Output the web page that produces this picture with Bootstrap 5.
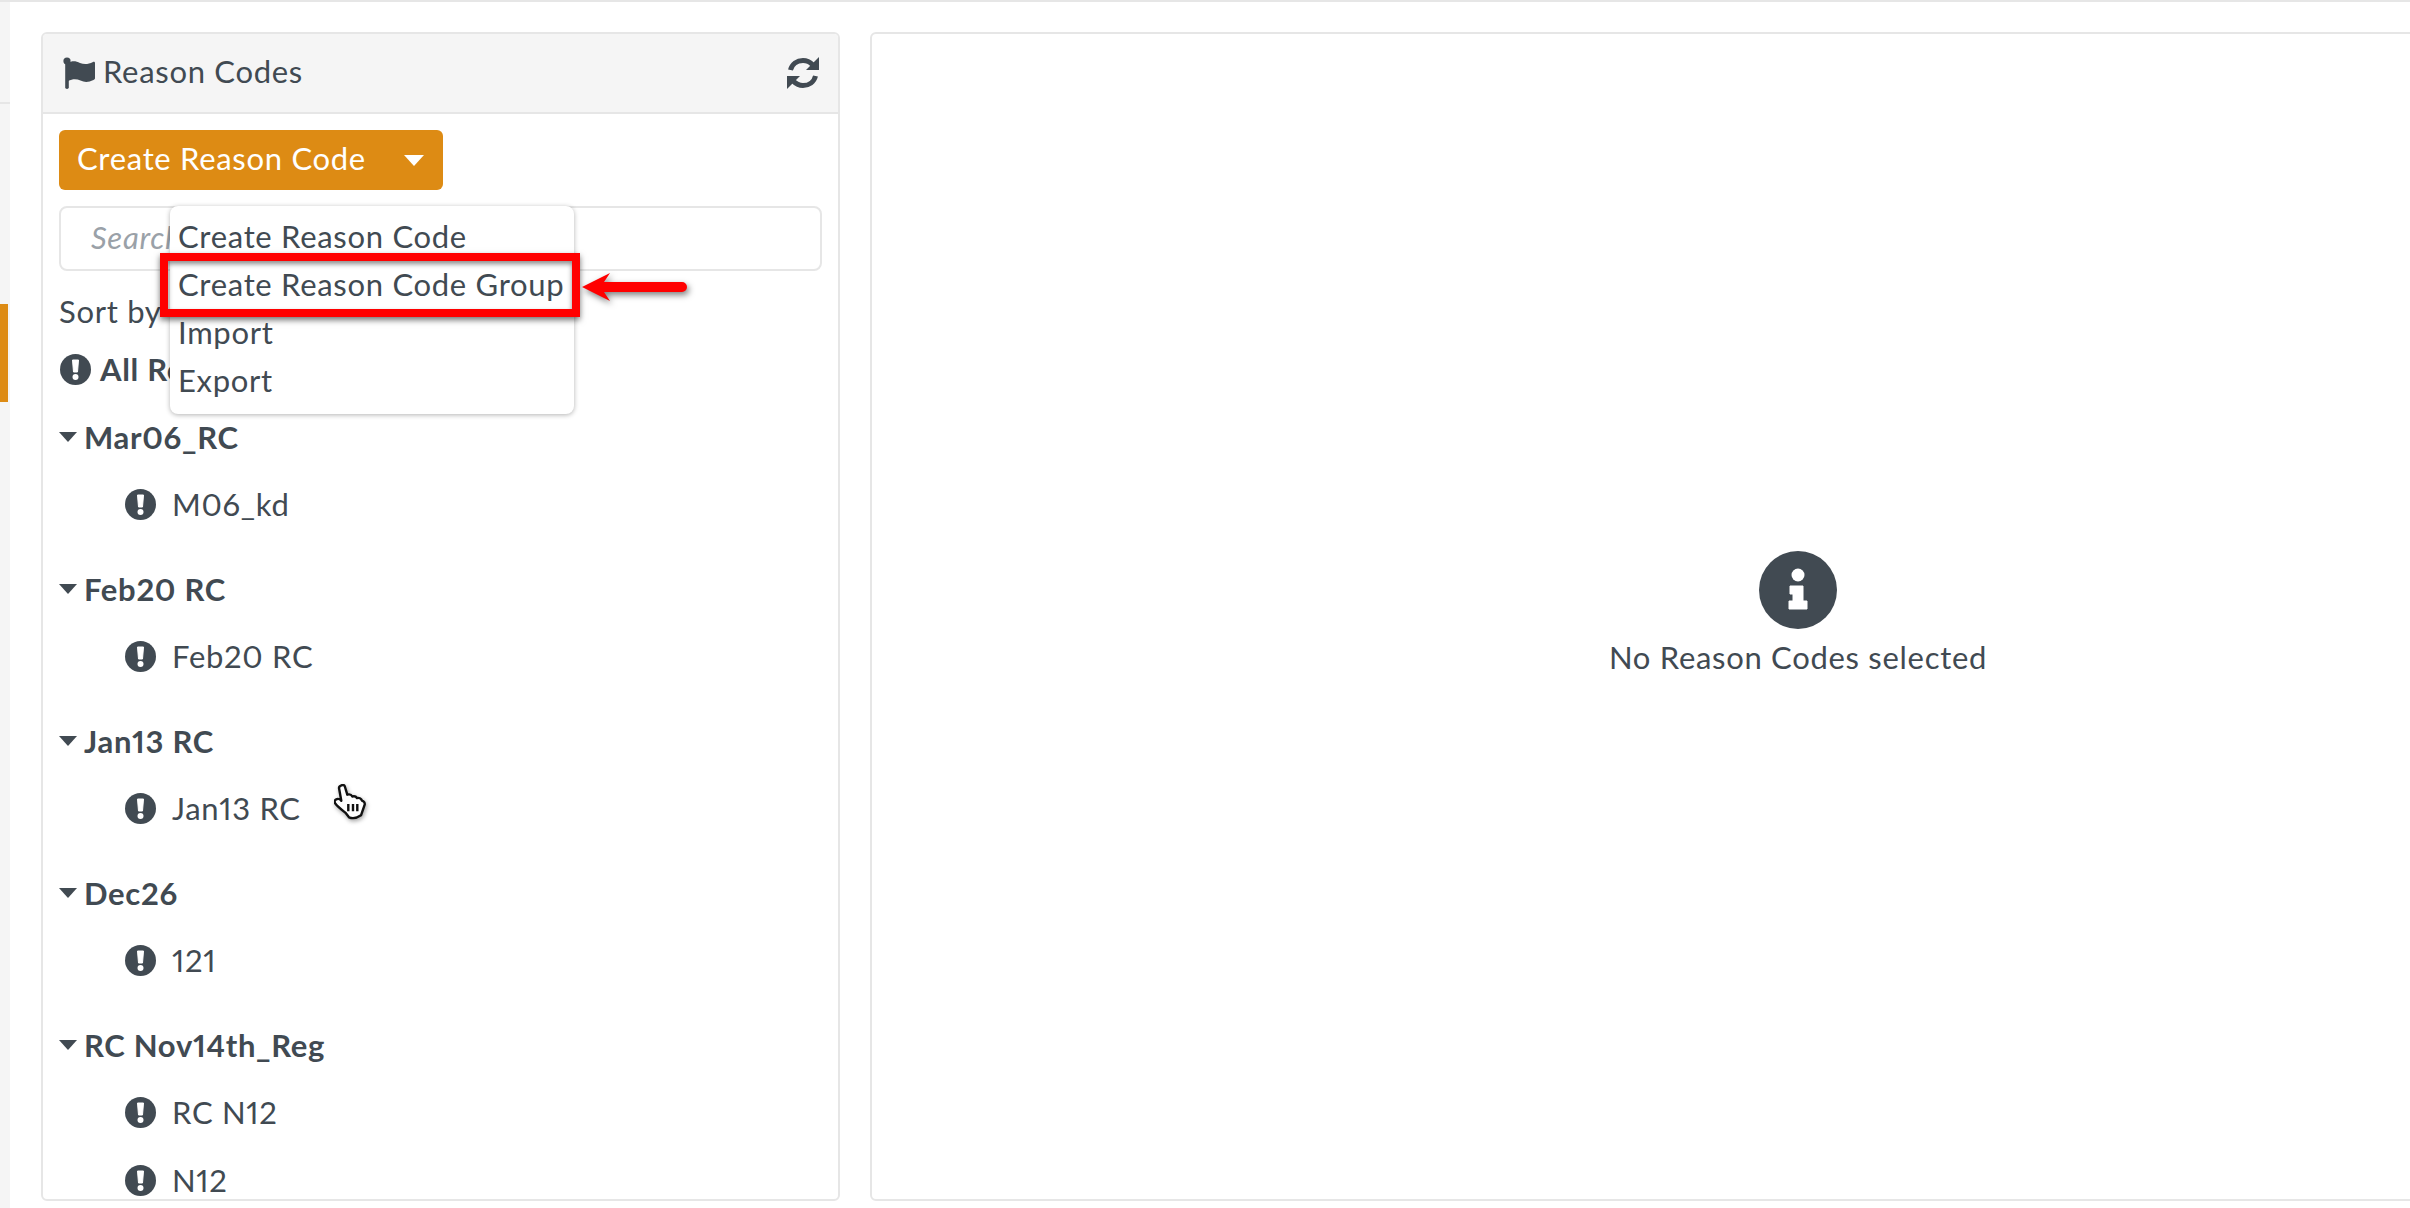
<!DOCTYPE html>
<html lang="en">

<head>
  <meta charset="UTF-8" />
  <title>Reason Codes</title>
  <link href="https://cdn.jsdelivr.net/npm/bootstrap@5.3.0/dist/css/bootstrap.min.css" rel="stylesheet" />
  <style>
    html, body { height: 100%; overflow: hidden; }
    body { font-family: Lato, "Open Sans", sans-serif; font-size: 31px; letter-spacing: .7px; font-feature-settings: "pnum"; color: #414a52; background: #fff; border-top: 2px solid #e6e6e6; }
    .app-wrap { height: 1206px; position: relative; overflow: hidden; }
    .side-strip { width: 10px; background: #f5f5f5; flex: none; }
    .side-line { height: 2px; margin-top: 100px; background: #e6e6e6; }
    .side-mark { height: 98px; width: 8px; margin-top: 200px; background: #dd8b14; }
    .main-area { padding: 30px 0 7px 31px; gap: 30px; min-width: 0; }
    .rc-card { width: 799px; flex: none; border: 2px solid #e6e6e6; border-radius: 6px; overflow: hidden; }
    .rc-head { height: 80px; flex: none; background: #f5f5f5; border-bottom: 2px solid #e6e6e6; padding: 0 19px 0 20px; }
    .rc-head svg { display: block; }
    .rc-title { margin-top: -3px; }
    .rc-body { padding: 16px 16px 0; position: relative; flex: none; }
    .btn-create { width: 384px; height: 60px; background: #dd8b14; color: #fff; font-size: 31px; letter-spacing: .7px; border: 0; border-radius: 6px; padding: 0 19px 3px 18px; }
    .btn-create:hover { background: #dd8b14; color: #fff; }
    .caret-w { width: 0; height: 0; margin-top: 3px; border-left: 10px solid transparent; border-right: 10px solid transparent; border-top: 11px solid #fff; }
    .rc-search { height: 65px; margin-top: 16px; font-size: 31px; letter-spacing: .7px; border: 2px solid #e6e6e6; border-radius: 8px; padding: 0 30px 3px; }
    .rc-search::placeholder { color: #9aa1a8; font-style: italic; }
    .sort-line { margin-top: 22px; line-height: 36px; }
    .all-line { margin-top: 22px; padding-left: 1px; line-height: 36px; font-weight: 700; gap: 9px; }
    .group-title { font-weight: 700; line-height: 36px; gap: 7px; margin-top: 49px; }
    .all-line + .group-title { margin-top: 32px; }
    .caret-d { width: 0; height: 0; border-left: 9px solid transparent; border-right: 9px solid transparent; border-top: 10px solid #414a52; }
    .rc-item { line-height: 36px; margin-top: 31px; padding-left: 66px; gap: 16px; }
    .rc-item + .rc-item { margin-top: 32px; }
    .rc-card .rc-menu { display: block; position: absolute; top: 92px; left: 127px; width: 404px; height: 208px; margin: 0; padding: 6px 0 0 8px; border: 0; border-radius: 8px; box-shadow: 0 1px 5px rgba(0,0,0,.3); font-size: 31px; color: #414a52; }
    .rc-menu .dropdown-item { padding: 0; height: 48px; line-height: 48px; color: #414a52; background: none; }
    .red-box { position: absolute; left: 160px; top: 251px; width: 420px; height: 64px; z-index: 1100; border: 8px solid #f00; box-shadow: 0 3px 6px rgba(0,0,0,.55), inset 0 3px 5px rgba(0,0,0,.45); }
    .red-arrow { position: absolute; left: 580px; top: 268px; z-index: 1100; filter: drop-shadow(2px 3px 3px rgba(0,0,0,.5)); }
    .hand { position: absolute; left: 334px; top: 782px; z-index: 1100; filter: drop-shadow(1px 2px 2px rgba(0,0,0,.35)); }
    .empty-pane { flex: none; width: 1856px; border: 2px solid #e6e6e6; border-radius: 6px; }
    .empty-inner { margin-top: 517px; }
    .empty-text { margin-top: 10px; line-height: 36px; }
  </style>
</head>

<body>
  <div class="app-wrap d-flex">
    <div class="side-strip">
      <div class="side-line"></div>
      <div class="side-mark"></div>
    </div>

    <div class="main-area d-flex flex-grow-1">
      <!-- Left list -->
      <div class="rc-card card">
        <div class="rc-head d-flex align-items-center justify-content-between">
          <div class="d-flex align-items-center gap-2">
            <svg width="32" height="33" viewBox="0 0 32 33"><circle cx="4" cy="4" r="3.6" fill="#414a52"/><rect x="2.2" y="3" width="3.6" height="29" rx="1.8" fill="#414a52"/><path d="M5 6c4-2.500 8-2 12 0 4 1.500 8 1.500 13-1 1-.5 2 0 2 1v15c0 1-.5 1.500-1.500 2-5 2.500-9 2.500-13 .5-4-1.800-7.500-2-12.500.5z" fill="#414a52"/></svg>
            <span class="rc-title">Reason Codes</span>
          </div>
          <svg width="32" height="32" viewBox="0 0 32 32"><path d="M3.500 13C5 7 10 3.500 16 3.500c3.800 0 7 1.500 9.300 3.900" fill="none" stroke="#414a52" stroke-width="5"/><path d="M32 0v13H19z" fill="#414a52"/><path d="M28.500 19c-1.500 6-6.500 9.500-12.500 9.500-3.800 0-7-1.500-9.300-3.900" fill="none" stroke="#414a52" stroke-width="5"/><path d="M0 32V19h13z" fill="#414a52"/></svg>
        </div>
        <div class="rc-body">
          <button class="btn btn-create d-flex align-items-center justify-content-between" type="button">Create Reason Code <span class="caret-w"></span></button>
          <input class="form-control rc-search" type="text" placeholder="Search" />
          <div class="sort-line">Sort by :</div>
          <div class="all-line d-flex align-items-center">
            <svg width="31" height="31" viewBox="0 0 31 31"><use href="#excl"/></svg><span>All Reason Codes</span>
          </div>

          <div class="group-title d-flex align-items-center"><span class="caret-d"></span>Mar06_RC</div>
          <div class="rc-item d-flex align-items-center"><svg width="31" height="31" viewBox="0 0 31 31"><use href="#excl"/></svg>M06_kd</div>

          <div class="group-title d-flex align-items-center"><span class="caret-d"></span>Feb20 RC</div>
          <div class="rc-item d-flex align-items-center"><svg width="31" height="31" viewBox="0 0 31 31"><use href="#excl"/></svg>Feb20 RC</div>

          <div class="group-title d-flex align-items-center"><span class="caret-d"></span>Jan13 RC</div>
          <div class="rc-item d-flex align-items-center"><svg width="31" height="31" viewBox="0 0 31 31"><use href="#excl"/></svg>Jan13 RC</div>

          <div class="group-title d-flex align-items-center"><span class="caret-d"></span>Dec26</div>
          <div class="rc-item d-flex align-items-center"><svg width="31" height="31" viewBox="0 0 31 31"><use href="#excl"/></svg>121</div>

          <div class="group-title d-flex align-items-center"><span class="caret-d"></span>RC Nov14th_Reg</div>
          <div class="rc-item d-flex align-items-center"><svg width="31" height="31" viewBox="0 0 31 31"><use href="#excl"/></svg>RC N12</div>
          <div class="rc-item d-flex align-items-center"><svg width="31" height="31" viewBox="0 0 31 31"><use href="#excl"/></svg>N12</div>

          <ul class="dropdown-menu rc-menu">
            <li><a class="dropdown-item" href="#">Create Reason Code</a></li>
            <li><a class="dropdown-item" href="#">Create Reason Code Group</a></li>
            <li><a class="dropdown-item" href="#">Import</a></li>
            <li><a class="dropdown-item" href="#">Export</a></li>
          </ul>
        </div>
      </div>

      <!-- Right pane -->
      <div class="empty-pane">
        <div class="empty-inner d-flex flex-column align-items-center">
          <svg width="78" height="78" viewBox="0 0 78 78"><circle cx="39" cy="39" r="39" fill="#414a52"/><circle cx="39" cy="24" r="6.500" fill="#fff"/><path d="M31 35h13v15h4v8H30v-8h4v-7h-3z" fill="#fff" stroke="#fff" stroke-width="1" stroke-linejoin="round"/></svg>
          <div class="empty-text">No Reason Codes selected</div>
        </div>
      </div>
    </div>

    <!-- annotation over the menu -->
    <div class="red-box"></div>
    <svg class="red-arrow" width="112" height="36" viewBox="0 0 112 36"><path d="M2 17L30 3l-6 9h78a5 5 0 0 1 0 10H24l6 9z" fill="#f00"/></svg>
    <svg class="hand" width="33" height="36" viewBox="0 0 33 36"><path d="M5 4C5 1.500 9.500 0 10.700 2L13.300 10.700C15.500 10 17.500 11 18.300 12.500 20 12 22 12.500 23 14 25.500 13.500 27.500 15 28 16.700 30 17 31 19 30.700 20.700L27 31.300C23 34 18 34.500 15 33.300L11.700 29C8 26 4 23 1.700 20 0 18 .5 16.500 2 15.500 3.500 14.500 6 15 7.300 16.700z" fill="#fff" stroke="#111" stroke-width="2.400" stroke-linejoin="round"/><path d="M14.300 20v7.300M19 20v7.300M23.300 20v7.300" stroke="#111" stroke-width="2.400"/></svg>
  </div>

  <svg width="0" height="0" class="d-block">
    <defs>
      <g id="excl"><circle cx="15.500" cy="15.500" r="15.500" fill="#414a52"/><path d="M12.500 6h6l-1 12h-4z" fill="#fff" stroke="#fff" stroke-linejoin="round"/><circle cx="15.500" cy="23" r="3" fill="#fff"/></g>
    </defs>
  </svg>

  <script src="https://cdn.jsdelivr.net/npm/bootstrap@5.3.0/dist/js/bootstrap.bundle.min.js"></script>
</body>

</html>
